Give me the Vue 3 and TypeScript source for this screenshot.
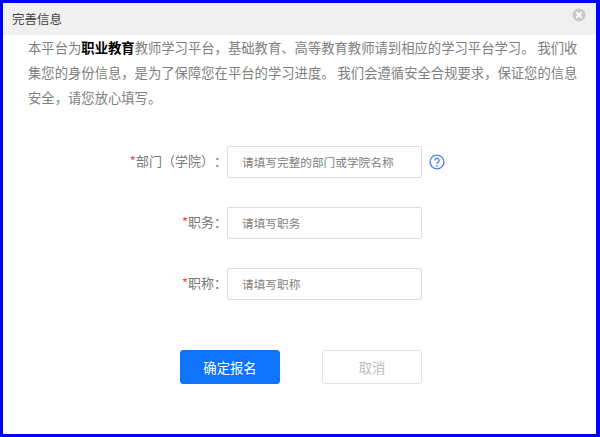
<script setup lang="ts">
interface Field { label: string; note?: string; placeholder: string; help?: boolean }
const fields: Field[] = [
  { label: '部门', note: '学院', placeholder: '请填写完整的部门或学院名称', help: true },
  { label: '职务', placeholder: '请填写职务' },
  { label: '职称', placeholder: '请填写职称' },
]
</script>

<template>
  <div class="dialog">
    <header class="head">
      <span class="title">完善信息</span>
      <svg class="close" viewBox="0 0 14 14" width="14" height="14" aria-label="关闭">
        <circle cx="7" cy="7" r="6.5" fill="#c8c8c8" />
        <path d="M4.7 4.7l4.6 4.6M9.3 4.7L4.7 9.3" stroke="#fff" stroke-width="1.7" stroke-linecap="round" />
      </svg>
    </header>
    <p class="intro">
      本平台为<b>职业教育</b>教师学习平台，基础教育、高等教育教师请到相应的学习平台学习。 我们收集您的身份信息，是为了保障您在平台的学习进度。 我们会遵循安全合规要求，保证您的信息安全，请您放心填写。
    </p>
    <form class="form" @submit.prevent>
      <div v-for="f in fields" :key="f.label" class="row">
        <label class="label"><i>*</i>{{ f.label }}<template v-if="f.note"><span class="paren">（</span>{{ f.note }}<span class="paren">）</span></template>：</label>
        <input class="input" type="text" :placeholder="f.placeholder" />
        <svg v-if="f.help" class="help" viewBox="0 0 16 16" width="16" height="16">
          <circle cx="8" cy="8" r="6.9" fill="none" stroke="#4a80ee" stroke-width="1.4" />
          <path d="M5.9 6.4a2.1 2.1 0 1 1 3.3 1.7c-.8.5-1.2.9-1.2 1.8" fill="none" stroke="#4a80ee" stroke-width="1.3" />
          <circle cx="8" cy="11.8" r=".85" fill="#4a80ee" />
        </svg>
      </div>
      <div class="actions">
        <button class="btn primary" type="submit">确定报名</button>
        <button class="btn ghost" type="button">取消</button>
      </div>
    </form>
  </div>
</template>

<style>
html, body { margin: 0; background: #fff; }
</style>

<style scoped>
.dialog {
  box-sizing: border-box;
  width: 600px;
  height: 437px;
  border: solid #0000ff;
  border-width: 3px 4px 3px 3px;
  background: #fff;
  font-family: "Noto Sans CJK SC", "Liberation Sans", sans-serif;
  color: #666;
  overflow: hidden;
}
.head {
  height: 32px;
  background: #f0f0f0;
  display: flex;
  align-items: center;
  justify-content: space-between;
  padding: 0 10px 0 9px;
}
.title { font-size: 12.5px; color: #444; margin-top: -2px; }
.close { display: block; margin-top: -8px; }
.intro {
  margin: 0;
  padding: 0 17px 0 25px;
  font-size: 13.33px;
  line-height: 25px;
  color: #808080;
}
.intro b { color: #000; font-weight: 700; }
.form { padding-top: 36px; }
.row {
  display: flex;
  align-items: center;
  height: 32px;
  margin-bottom: 29px;
}
.label {
  box-sizing: border-box;
  width: 224px;
  flex: none;
  text-align: right;
  font-size: 13px;
  color: #777;
  white-space: nowrap;
  padding-bottom: 3px;
  text-spacing-trim: space-all;
}
.label i { color: #f44; font-style: normal; }
.paren { font-family: "Noto Sans CJK TC", sans-serif; }
.input {
  box-sizing: border-box;
  width: 195px;
  height: 32px;
  border: 1px solid #ddd;
  border-radius: 2px;
  padding: 0 14px 2px;
  font: inherit;
  font-size: 11.67px;
  outline: none;
}
.input::placeholder { color: #808080; opacity: 1; }
.help { margin-left: 7px; margin-top: -1px; }
.actions {
  display: flex;
  gap: 42px;
  padding: 21px 0 0 177px;
}
.btn {
  box-sizing: border-box;
  width: 100px;
  height: 34px;
  border-radius: 3px;
  font: inherit;
  font-size: 13.33px;
}
.primary { background: #0e74fc; border: 1px solid #0e74fc; color: #fff; }
.ghost { background: #fff; border: 1px solid #e5e5e5; color: #bbb; }
</style>
